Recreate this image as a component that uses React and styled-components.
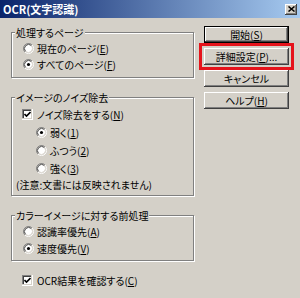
import React from 'react';
import styled, { createGlobalStyle } from 'styled-components';

const Global = createGlobalStyle`
  html, body { margin: 0; padding: 0; background: #d4d0c8; }
  body { font-family: "Noto Sans CJK JP", "Noto Sans", sans-serif; }
`;

const Window = styled.div`
  width: 300px;
  height: 298px;
  background: #d4d0c8;
  overflow: hidden;
  display: flex;
  flex-direction: column;
  font-family: "Noto Sans CJK JP", "Noto Sans", sans-serif;
  font-size: 10px;
  color: #000;
  font-feature-settings: "palt";
`;

const TitleBar = styled.div`
  height: 18px;
  flex: none;
  box-sizing: border-box;
  display: flex;
  align-items: center;
  justify-content: space-between;
  padding: 0 3px;
  background: linear-gradient(to right, #0a246a, #a6caf0);
  color: #fff;
  font-weight: bold;
  font-size: 11px;
  line-height: 18px;
`;

const CloseBtn = styled.div`
  width: 12px;
  height: 11px;
  box-sizing: border-box;
  background: #d4d0c8;
  box-shadow: inset -1px -1px #404040, inset 1px 1px #fff, inset -2px -2px #808080;
  display: flex;
  align-items: center;
  justify-content: center;
`;

const Body = styled.div`
  display: flex;
  padding-left: 11px;
`;

const LeftCol = styled.div`
  width: 183px;
  display: flex;
  flex-direction: column;
  padding-top: 14px;
`;

const RightCol = styled.div`
  width: 85px;
  margin-left: 10px;
  padding-top: 8px;
  display: flex;
  flex-direction: column;
  gap: 5px;
`;

const Group = styled.div`
  border: 1px solid #808080;
  box-shadow: inset 1px 1px #fff, 1px 1px #fff;
  margin-top: ${p => p.$mt || 0}px;
  padding: 0 0 ${p => p.$pb || 0}px;
  display: flex;
  flex-direction: column;
`;

const Legend = styled.div`
  align-self: flex-start;
  margin: -7px 0 0 3px;
  padding: 0 1px;
  height: 13px;
  line-height: 13px;
  background: #d4d0c8;
  margin-bottom: ${p => p.$mb || 0}px;
`;

const Row = styled.label`
  display: flex;
  align-items: center;
  height: ${p => p.$h || 16}px;
  padding-left: ${p => p.$pl || 0}px;
  gap: ${p => p.$gap || 3}px;
  margin-top: ${p => p.$mt || 0}px;
  white-space: nowrap;
`;

const Note = styled.div`
  height: ${p => p.$h || 16}px;
  line-height: ${p => p.$h || 16}px;
  padding-left: 4px;
  white-space: nowrap;
`;

const Box = styled.span`
  width: 11px;
  height: 11px;
  flex: none;
  box-sizing: border-box;
  background: #fff;
  box-shadow: inset -1px -1px #fff, inset -2px -2px #d4d0c8, inset 1px 1px #808080, inset 2px 2px #404040;
  display: flex;
  align-items: center;
  justify-content: center;
`;

const Button = styled.div`
  height: 17px;
  box-sizing: border-box;
  background: #d4d0c8;
  display: flex;
  align-items: center;
  justify-content: center;
  white-space: nowrap;
  border: ${p => (p.$default ? '1px solid #000' : 'none')};
  box-shadow: inset -1px -1px #404040, inset 1px 1px #fff, inset -2px -2px #808080;
`;

const Highlight = styled.div`
  margin: -5px;
  padding: 2px;
  border: 3px solid #e5131b;
`;

function Radio({ checked }) {
  return (
    <svg width="11" height="11" viewBox="0 0 12 12" style={{ flex: 'none' }}>
      <circle cx="6" cy="6" r="4.5" fill="#fff" />
      <path d="M2.11 9.89 A5.5 5.5 0 0 1 9.89 2.11" fill="none" stroke="#808080" />
      <path d="M9.89 2.11 A5.5 5.5 0 0 1 2.11 9.89" fill="none" stroke="#fff" />
      <path d="M2.82 9.18 A4.5 4.5 0 0 1 9.18 2.82" fill="none" stroke="#404040" />
      <path d="M9.18 2.82 A4.5 4.5 0 0 1 2.82 9.18" fill="none" stroke="#d4d0c8" />
      {checked && <circle cx="6" cy="6" r="1.7" fill="#000" />}
    </svg>
  );
}

function Check() {
  return (
    <Box>
      <svg width="7" height="7" viewBox="0 0 7 7">
        <path d="M0.5 3 L2.5 5 L6.5 1" fill="none" stroke="#000" strokeWidth="1.6" />
      </svg>
    </Box>
  );
}

export default function App() {
  return (
    <>
      <Global />
      <Window>
        <TitleBar>
          <span>OCR(文字認識)</span>
          <CloseBtn>
            <svg width="7" height="6" viewBox="0 0 7 6">
              <path d="M0.5 0.5 L6.5 5.5 M6.5 0.5 L0.5 5.5" stroke="#000" strokeWidth="1.5" />
            </svg>
          </CloseBtn>
        </TitleBar>
        <Body>
          <LeftCol>
            <Group $pb={5}>
              <Legend $mb={1}>処理するページ</Legend>
              <Row $pl={11}>
                <Radio />
                <span>現在のページ(<u>E</u>)</span>
              </Row>
              <Row $pl={11}>
                <Radio checked />
                <span>すべてのページ(<u>F</u>)</span>
              </Row>
            </Group>

            <Group $mt={19} $pb={2}>
              <Legend $mb={1}>イメージのノイズ除去</Legend>
              <Row $h={18} $pl={10} $gap={4}>
                <Check />
                <span>ノイズ除去をする(<u>N</u>)</span>
              </Row>
              <Row $h={18} $pl={24}>
                <Radio checked />
                <span>弱く(<u>1</u>)</span>
              </Row>
              <Row $h={18} $pl={24}>
                <Radio />
                <span>ふつう(<u>2</u>)</span>
              </Row>
              <Row $h={18} $pl={24}>
                <Radio />
                <span>強く(<u>3</u>)</span>
              </Row>
              <Note>(注意:文書には反映されません)</Note>
            </Group>

            <Group $mt={19} $pb={3}>
              <Legend $mb={1}>カラーイメージに対する前処理</Legend>
              <Row $h={17} $pl={11}>
                <Radio />
                <span>認識率優先(<u>A</u>)</span>
              </Row>
              <Row $h={17} $pl={11}>
                <Radio checked />
                <span>速度優先(<u>V</u>)</span>
              </Row>
            </Group>

            <Row $mt={11} $pl={11} $gap={4}>
              <Check />
              <span>OCR結果を確認する(<u>C</u>)</span>
            </Row>
          </LeftCol>

          <RightCol>
            <Button $default>開始(<u>S</u>)</Button>
            <Highlight>
              <Button>詳細設定(<u>P</u>)...</Button>
            </Highlight>
            <Button>キャンセル</Button>
            <Button>ヘルプ(<u>H</u>)</Button>
          </RightCol>
        </Body>
      </Window>
    </>
  );
}
